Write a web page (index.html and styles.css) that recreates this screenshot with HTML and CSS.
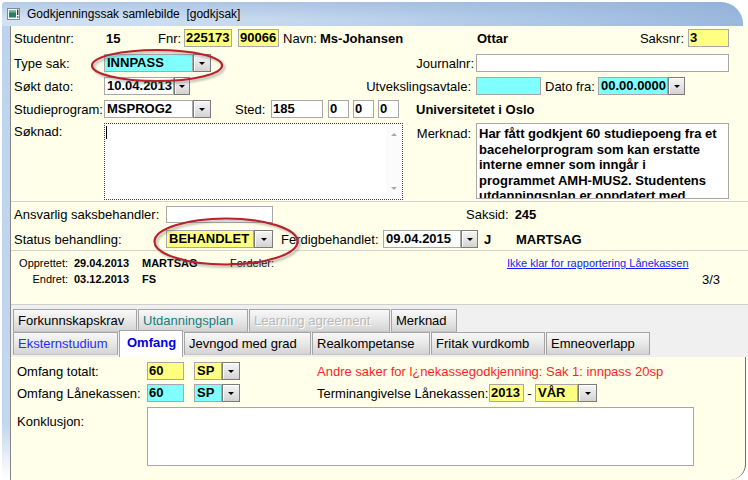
FILE: index.html
```html
<!DOCTYPE html>
<html>
<head>
<meta charset="utf-8">
<title>Godkjenningssak samlebilde</title>
<link rel="stylesheet" href="styles.css">
</head>
<body>
<div class="window">
  <div class="titlebar">
    <svg class="appicon" viewBox="0 0 13 12" width="13" height="12">
      <rect x="0.5" y="0.5" width="12" height="11" fill="#f6f6f6" stroke="#7f8b97"/>
      <rect x="2" y="2.5" width="7" height="7" fill="#2e7a66"/>
      <rect x="2" y="2.5" width="7" height="2" fill="#67b79e"/>
      <rect x="10" y="1.5" width="1.4" height="5.5" fill="#3a3a3a"/>
      <rect x="10" y="8.3" width="1.4" height="1.4" fill="#3a3a3a"/>
    </svg>
    <span class="title">Godkjenningssak samlebilde  [godkjsak]</span>
  </div>
  <div class="frame">
    <div class="leftedge"></div>
    <div class="content">
      <div class="header">
        <div class="row">
          <span class="lbl-main">Studentnr:</span>
          <span class="b c-stnr">15</span>
          <span class="c-fnr">Fnr:</span>
          <span class="inp yellow w48">225173</span>
          <span class="inp yellow w41 ml6">90066</span>
          <span class="c-navn">Navn:</span>
          <span class="b c-name">Ms-Johansen</span>
          <span class="b">Ottar</span>
          <span class="push">Saksnr:</span>
          <span class="inp yellow w41 ml4">3</span>
        </div>

        <div class="row split mt7">
          <div class="cell">
            <span class="lbl-main">Type sak:</span>
            <span class="sel"><span class="sv cyan w89">INNPASS</span><span class="sb"></span></span>
            <span class="rl rl-j">Journalnr:</span>
          </div>
          <div class="cell"><span class="inp wfull"></span></div>
        </div>

        <div class="row split mt5">
          <div class="cell">
            <span class="lbl-main">Søkt dato:</span>
            <span class="sel"><span class="sv w70">10.04.2013</span><span class="sb sb16"></span></span>
            <span class="rl">Utvekslingsavtale:</span>
          </div>
          <div class="cell">
            <span class="inp cyan w65"></span>
            <span class="c-datofra">Dato fra:</span>
            <span class="sel"><span class="sv cyan w70">00.00.0000</span><span class="sb sb17"></span></span>
          </div>
        </div>

        <div class="row mt5">
          <span class="lbl-main">Studieprogram:</span>
          <span class="sel"><span class="sv w89">MSPROG2</span><span class="sb"></span></span>
          <span class="c-sted">Sted:</span>
          <span class="inp w52">185</span>
          <span class="inp w21 ml5">0</span>
          <span class="inp w21 ml4">0</span>
          <span class="inp w21 ml4">0</span>
          <span class="b ml17">Universitetet i Oslo</span>
        </div>

        <div class="row split tall mt5">
          <div class="cell top">
            <span class="lbl-main pt1">Søknad:</span>
            <div class="soknad">
              <span class="caret"></span>
              <span class="vscroll"></span>
            </div>
            <span class="rl pt3">Merknad:</span>
          </div>
          <div class="cell top">
            <div class="merknad">Har fått godkjent 60 studiepoeng fra et<br>bacehelorprogram som kan erstatte<br>interne emner som inngår i<br>programmet AMH-MUS2. Studentens<br>utdanningsplan er oppdatert med</div>
          </div>
        </div>

        <div class="sep mt1"></div>

        <div class="row h17 mt4">
          <span class="lbl-wide">Ansvarlig saksbehandler:</span>
          <span class="inp w107 h17"></span>
          <span class="c-saksid">Saksid:</span>
          <span class="b ml6">245</span>
        </div>

        <div class="row mt7">
          <span class="lbl-wide">Status behandling:</span>
          <span class="sel"><span class="sv yellow w88">BEHANDLET</span><span class="sb sb19"></span></span>
          <span class="c-ferdig">Ferdigbehandlet:</span>
          <span class="sel"><span class="sv w78">09.04.2015</span><span class="sb sb17"></span></span>
          <span class="b c-j">J</span>
          <span class="b">MARTSAG</span>
        </div>

        <div class="sep mt2"></div>

        <div class="info">
          <span class="il">Opprettet:</span>
          <span class="iv">29.04.2013</span>
          <span class="iv2">MARTSAG</span>
          <span class="ifo">Fordeler:</span>
          <a class="link" href="#">Ikke klar for rapportering Lånekassen</a>

          <span class="il">Endret:</span>
          <span class="iv">03.12.2013</span>
          <span class="iv2">FS</span>
          <span class="ifo"></span>
          <span class="frac">3/3</span>
        </div>
      </div>

      <div class="tabs">
        <div class="tabrow">
          <span class="tab t-fork">Forkunnskapskrav</span>
          <span class="tab t-utd teal">Utdanningsplan</span>
          <span class="tab t-learn disabled">Learning agreement</span>
          <span class="tab t-merk">Merknad</span>
        </div>
        <div class="tabrow">
          <span class="tab t-eks blue">Eksternstudium</span>
          <span class="tab t-omf active">Omfang</span>
          <span class="tab t-jev">Jevngod med grad</span>
          <span class="tab t-real">Realkompetanse</span>
          <span class="tab t-frit">Fritak vurdkomb</span>
          <span class="tab t-emne">Emneoverlapp</span>
        </div>
      </div>

      <div class="detail">
        <div class="drow">
          <span class="dl">Omfang totalt:</span>
          <span class="inp yellow w37">60</span>
          <span class="sel ml10"><span class="sv yellow w28">SP</span><span class="sb"></span></span>
          <span class="warn">Andre saker for l¿nekassegodkjenning: Sak 1: innpass 20sp</span>
        </div>
        <div class="drow mt4">
          <span class="dl">Omfang Lånekassen:</span>
          <span class="inp cyan w37">60</span>
          <span class="sel ml10"><span class="sv cyan w28">SP</span><span class="sb"></span></span>
          <span class="term">Terminangivelse Lånekassen:</span>
          <span class="inp yellow w35">2013</span>
          <span class="dash">-</span>
          <span class="sel"><span class="sv yellow w43">VÅR</span><span class="sb sb19"></span></span>
        </div>
        <div class="drow tallrow mt5">
          <span class="dl pt7">Konklusjon:</span>
          <div class="konk"></div>
        </div>
      </div>
    </div>
  </div>

  <svg class="marks" width="748" height="480" viewBox="0 0 748 480">
    <defs>
      <filter id="sh" x="-20%" y="-50%" width="140%" height="200%">
        <feGaussianBlur stdDeviation="1.3"/>
      </filter>
    </defs>
    <ellipse cx="159" cy="67.5" rx="65" ry="15.5" fill="none" stroke="#6a6a6a" stroke-opacity="0.45" stroke-width="2.5" filter="url(#sh)"/>
    <ellipse cx="157" cy="65.5" rx="65" ry="15.5" fill="none" stroke="#b8222b" stroke-width="2.2"/>
    <ellipse cx="228" cy="243.5" rx="71.5" ry="23" fill="none" stroke="#6a6a6a" stroke-opacity="0.45" stroke-width="2.5" filter="url(#sh)"/>
    <ellipse cx="226" cy="241.5" rx="71.5" ry="23" fill="none" stroke="#b8222b" stroke-width="2.2"/>
  </svg>
</div>
</body>
</html>
```

FILE: styles.css
```css
* { box-sizing: border-box; }

html, body {
  margin: 0;
  padding: 0;
  background: #ffffff;
}

body {
  font-family: "Liberation Sans", Arial, sans-serif;
  font-size: 13px;
  color: #000;
  width: 748px;
  height: 480px;
  overflow: hidden;
}

.window {
  position: relative;
  width: 748px;
  height: 480px;
  display: flex;
  flex-direction: column;
}

/* ---------- title bar ---------- */
.titlebar {
  flex: none;
  height: 24px;
  margin: 2px 5px 0 2px;
  border-radius: 3px 22px 0 0;
  background:
    linear-gradient(180deg, rgba(140, 172, 214, 0.45) 0%, rgba(255, 255, 255, 0) 70%),
    linear-gradient(90deg, #d3e2f3 0%, #c3d7ee 40%, #abc5e5 75%, #9ab7dc 100%);
  display: flex;
  align-items: center;
  padding-left: 5px;
  font-size: 12px;
  color: #000;
}

.appicon { flex: none; margin-right: 7px; }
.title { white-space: pre; }

/* ---------- frame ---------- */
.frame {
  flex: 1;
  display: flex;
  min-height: 0;
}

.leftedge {
  flex: none;
  width: 8px;
  margin-left: 2px;
  background: linear-gradient(180deg, #bed3ed 0%, #c3d7ee 88%, #eef3f9 96%, #ffffff 100%);
}

.content {
  flex: 1;
  min-width: 0;
  display: flex;
  flex-direction: column;
  border-left: 1px solid #858585;
}

/* ---------- header panel ---------- */
.header {
  flex: none;
  height: 279px;
  background: #ffffea;
  border-bottom: 1px solid #cfcfcf;
  padding-top: 3px;
}

.row {
  display: flex;
  align-items: center;
  height: 18px;
  padding: 0 19px 0 3px;
  white-space: nowrap;
}

.row.split {
  display: grid;
  grid-template-columns: 462px 253px;
}

.row.tall { height: 77px; }
.row.h17 { height: 17px; }

.cell {
  display: flex;
  align-items: center;
  height: 100%;
}
.cell.top { align-items: flex-start; }

.mt1 { margin-top: 1px; }
.mt2 { margin-top: 2px; }
.mt4 { margin-top: 4px; }
.mt5 { margin-top: 5px; }
.mt7 { margin-top: 7px; }
.ml4 { margin-left: 4px; }
.ml5 { margin-left: 5px; }
.ml6 { margin-left: 6px; }
.ml10 { margin-left: 10px; }
.ml17 { margin-left: 17px; }
.pt1 { padding-top: 1px; }
.pt3 { padding-top: 3px; }
.pt7 { padding-top: 7px; }

.b { font-weight: bold; }

.lbl-main { flex: none; width: 90px; }
.lbl-wide { flex: none; width: 152px; }

.c-stnr { width: 54px; padding-left: 2px; }
.c-fnr { width: 26px; }
.c-navn { width: 37px; margin-left: 4px; }
.c-name { width: 157px; }
.push { margin-left: auto; }
.rl { margin-left: auto; padding-right: 5px; }
.rl-j { padding-right: 2px; }
.c-datofra { width: 53px; margin-left: 4px; }
.c-sted { width: 36px; margin-left: 24px; }
.c-saksid { margin-left: 193px; }
.c-ferdig { width: 102px; margin-left: 8px; }
.c-j { width: 32px; margin-left: 6px; }

/* ---------- inputs ---------- */
.inp {
  flex: none;
  display: block;
  height: 18px;
  border: 1px solid #a8a8a8;
  background: #ffffff;
  font-weight: bold;
  line-height: 16px;
  padding-left: 1px;
  overflow: hidden;
}
.inp.h17 { height: 17px; line-height: 15px; }

.yellow { background: #ffff80; }
.cyan { background: #80ffff; }

.w21 { width: 21px; }
.w35 { width: 35px; }
.w37 { width: 37px; }
.w41 { width: 41px; }
.w48 { width: 48px; }
.w52 { width: 52px; }
.w65 { width: 65px; }
.w107 { width: 107px; }
.wfull { width: 253px; }

.sel {
  flex: none;
  display: flex;
  height: 18px;
}

.sv {
  display: block;
  height: 18px;
  border: 1px solid #a8a8a8;
  font-weight: bold;
  line-height: 16px;
  padding-left: 2px;
  overflow: hidden;
  background-color: #ffffff;
}
.sv.yellow { background: #ffff80; }
.sv.cyan { background: #80ffff; }

.w28 { width: 28px; }
.w43 { width: 43px; }
.w70 { width: 70px; }
.w78 { width: 78px; }
.w88 { width: 88px; }
.w89 { width: 89px; }

.sb {
  position: relative;
  display: block;
  width: 18px;
  height: 18px;
  border: 1px solid #7b7b7b;
  background: linear-gradient(180deg, #f6f6f6 0%, #e2e2e2 60%, #d2d2d2 100%);
  box-shadow: inset 1px 1px 0 #ffffff;
}
.sb16 { width: 16px; }
.sb17 { width: 17px; }
.sb19 { width: 19px; }

.sb::after {
  content: "";
  position: absolute;
  left: 50%;
  top: 50%;
  margin-left: -3px;
  margin-top: -1px;
  border-left: 3px solid transparent;
  border-right: 3px solid transparent;
  border-top: 3px solid #000;
}

/* ---------- text areas ---------- */
.soknad {
  position: relative;
  flex: none;
  width: 299px;
  height: 77px;
  border: 1px dotted #404040;
  background: #ffffff;
}

.caret {
  position: absolute;
  left: 1px;
  top: 2px;
  width: 1px;
  height: 13px;
  background: #000;
}

.vscroll {
  position: absolute;
  right: 0;
  top: 0;
  bottom: 0;
  width: 16px;
  background: #fbfbfb;
}
.vscroll::before,
.vscroll::after {
  content: "";
  position: absolute;
  left: 5px;
  border-left: 3px solid transparent;
  border-right: 3px solid transparent;
}
.vscroll::before {
  top: 9px;
  border-bottom: 3px solid #a8a8a8;
}
.vscroll::after {
  bottom: 9px;
  border-top: 3px solid #a8a8a8;
}

.merknad {
  width: 253px;
  height: 76px;
  border: 1px solid #a8a8a8;
  background: #ffffff;
  font-weight: bold;
  line-height: 15.5px;
  padding: 2px 0 0 2px;
  white-space: nowrap;
  overflow: hidden;
}

.sep {
  height: 1px;
  background: #d4d4d4;
}

/* ---------- info lines ---------- */
.info {
  display: grid;
  grid-template-columns: 54px 74px 88px 277px 1fr;
  grid-auto-rows: 16px;
  align-items: center;
  padding: 4px 0 0 3px;
  font-size: 11px;
  white-space: nowrap;
}
.il { text-align: right; }
.iv { font-weight: bold; padding-left: 6px; }
.iv2 { font-weight: bold; }
.link { color: #1a1aff; text-decoration: underline; }
.frac {
  font-size: 13px;
  text-align: right;
  padding-right: 28px;
}

/* ---------- tabs ---------- */
.tabs {
  flex: none;
  height: 52px;
  background: #f0f0f0;
  padding: 4px 0 0 2px;
}

.tabrow {
  display: flex;
  gap: 1px;
  height: 23px;
  align-items: flex-start;
}

.tab {
  flex: none;
  display: block;
  height: 23px;
  border: 1px solid #a4a4a4;
  border-bottom-color: #c4c4c4;
  background: linear-gradient(180deg, #f8f8f8 0%, #e8e8e8 50%, #d4d4d4 100%);
  padding: 1px 0 0 4px;
  line-height: 20px;
  white-space: nowrap;
  overflow: hidden;
}

.t-fork { width: 124px; }
.t-utd { width: 110px; }
.t-learn { width: 141px; }
.t-merk { width: 66px; }
.t-eks { width: 105px; }
.t-omf { width: 64px; }
.t-jev { width: 127px; }
.t-real { width: 118px; }
.t-frit { width: 114px; }
.t-emne { width: 104px; }

.teal { color: #11807f; }
.blue { color: #2a2aff; }
.disabled { color: #b9b9b9; text-shadow: 1px 1px 0 #ffffff; }

.tab.active {
  position: relative;
  height: 27px;
  margin-top: -2px;
  background: #ffffff;
  border-bottom: none;
  font-weight: bold;
  color: #0000e8;
  padding: 0 0 0 7px;
  line-height: 24px;
}

/* ---------- detail panel ---------- */
.detail {
  flex: 1;
  background: #ffffea;
  margin-right: 2px;
  border-right: 1px solid #6e6e6e;
  border-bottom-right-radius: 16px;
  padding: 5px 0 0 6px;
}

.drow {
  display: flex;
  align-items: center;
  height: 18px;
  white-space: nowrap;
}
.drow.tallrow {
  height: 59px;
  align-items: flex-start;
}

.dl { flex: none; width: 130px; }
.warn { margin-left: 77px; color: #ff1f1f; }
.term { flex: none; width: 172px; margin-left: 77px; overflow: visible; }
.dash { flex: none; width: 11px; text-align: center; }

.konk {
  width: 547px;
  height: 59px;
  border: 1px solid #a8a8a8;
  background: #ffffff;
}

/* ---------- annotation ellipses ---------- */
.marks {
  position: absolute;
  left: 0;
  top: 0;
  pointer-events: none;
}
```
